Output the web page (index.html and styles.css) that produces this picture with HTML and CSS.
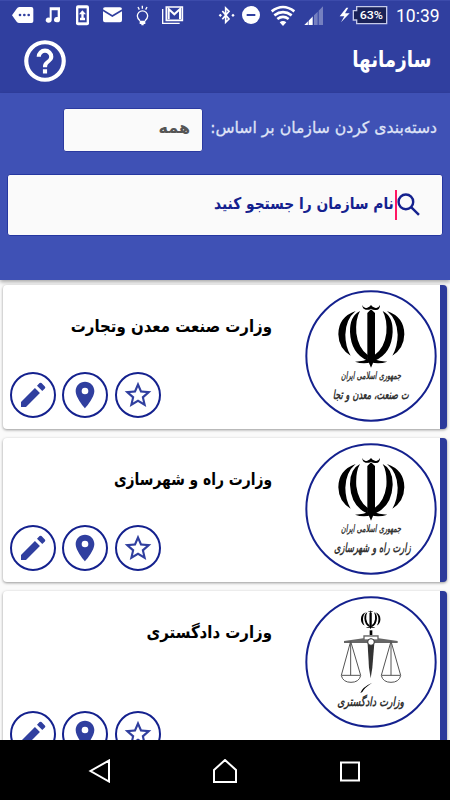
FILE: index.html
```html
<!DOCTYPE html>
<html lang="fa">
<head>
<meta charset="utf-8">
<meta name="viewport" content="width=device-width">
<title>سازمانها</title>
<link rel="stylesheet" href="styles.css">
</head>
<body>
<svg class="defs" aria-hidden="true">
  <defs>
    <symbol id="pencil" viewBox="0 0 24 24"><path d="M3 17.25V21h3.75L17.2 10.55l-3.75-3.75zM20.9 7.04a1 1 0 0 0 0-1.41l-2.54-2.54a1 1 0 0 0-1.41 0l-1.95 1.950 3.950 3.950z"/></symbol>
    <symbol id="pin" viewBox="0 0 24 24"><path d="M12 2C8.130 2 5 5.130 5 9c0 5.250 7 13 7 13s7-7.750 7-13c0-3.870-3.130-7-7-7zm0 9.500a2.500 2.500 0 1 1 0-5 2.500 2.500 0 0 1 0 5z"/></symbol>
    <symbol id="star" viewBox="0 0 24 24"><path d="M22 9.240l-7.190-.620L12 2 9.190 8.630 2 9.240l5.460 4.730L5.820 21 12 17.270 18.180 21l-1.630-7.030zM12 15.400l-3.760 2.270 1-4.280-3.320-2.880 4.380-.380L12 6.100l1.710 4.040 4.380.380-3.320 2.880 1 4.280z"/></symbol>
    <symbol id="emblem" viewBox="140 70 206 196">
      <path d="M216 76Q220 88 231 84Q239 81 242 76Q246 83 254 84Q264 87 269 76Q269 91 257 91Q248 92 242 87Q235 92 226 90Q216 88 216 76Z"/>
      <path d="M231 100L242 89 254 100V237L248 250 242 264 236 250 231 238Z"/>
      <path d="M209 94Q178 109 179 157Q182 222 232 243L233 227Q204 207 198 161Q195 118 209 94Z"/>
      <path d="M277 94Q308 109 307 157Q304 222 253 243L252 227Q282 207 288 161Q291 118 277 94Z"/>
      <path d="M196 94Q144 112 144 164Q145 207 181 228Q165 200 165 165Q166 119 196 94Z"/>
      <path d="M290 94Q342 112 342 164Q341 207 306 228Q322 200 322 165Q321 119 290 94Z"/>
      <path d="M194 246Q222 246 236 236H249Q264 246 291 246Q266 255 242 248Q218 255 194 246Z"/>
    </symbol>
  </defs>
</svg>
<div class="screen">
  <div class="status">
    <svg class="status-icons" viewBox="0 0 675 90">
      <g fill="#fff">
        <path d="M36 46L50 26Q53 21 58 21H94Q100 21 100 27V64Q100 69 94 69H58Q53 69 50 65Z"/>
        <path d="M149 22H180V59A9 8 0 1 1 173 51V31H155V60A9 8 0 1 1 149 53Z"/>
        <rect x="228" y="16" width="39" height="60" rx="6"/>
        <path d="M309 28Q309 22 315 22H360Q366 22 366 28L337 45Z"/>
        <path d="M309 34L337 51 366 34V61Q366 67 360 67H315Q309 67 309 61Z"/>
        <path d="M419 62H436V72H431V76H424V72H419Z"/>
      </g>
      <g fill="#303f9f"><circle cx="60" cy="45" r="4"/><circle cx="73" cy="45" r="4"/><circle cx="86" cy="45" r="4"/><path d="M235 25H260V67H235Z"/></g>
      <path d="M247 31L258 43H251V53H255V61H240V53H244V43H237Z" fill="#fff"/>
      <g fill="none" stroke="#fff" stroke-width="4">
        <path d="M420 62Q412 55 412 48A15 15 0 0 1 443 48Q443 55 435 62M427 17V26M414 21L418 29M441 21L437 29"/>
        <path d="M488 27V70H539"/>
        <path d="M499 21H547V61H499Z" stroke-width="5"/>
        <path d="M506 58V27L523 43 540 27V58" stroke-width="6"/>
      </g>
    </svg>
    <svg class="status-icons" viewBox="0 0 675 90">
      <path d="M-8 33L12 57 2 67V24L12 34-8 58" fill="none" stroke="#fff" stroke-width="5"/>
      <path d="M-14 41l5 5-5 5-5-5zM24 41l5 5-5 5-5-5z" fill="#fff"/>
      <circle cx="78" cy="45" r="27" fill="#fff"/><path d="M65 42H91V48H65Z" fill="#303f9f"/>
      <g fill="none" stroke="#fff" stroke-width="8"><path d="M140 34Q174 8 208 34M148 46Q174 27 200 46M157 57Q174 44 191 57"/></g>
      <path d="M164 67Q174 59 184 67L174 78Z" fill="#fff"/>
      <path d="M238 75L264 49V75Z" fill="#fff"/>
      <path d="M267 46L278 35V75H267ZM281 32L294 19V75H281Z" fill="#7580c0"/>
      <path d="M250 60V76M264 47V76" stroke="#303f9f" stroke-width="2"/>
      <path d="M364 23L344 49H358L348 67 374 40H360L370 23Z" fill="#fff"/>
      <path d="M395 20H485V71H395V60H385V32H395Z" fill="#1a2258" stroke="#c5cae9" stroke-width="4"/>
      <text class="battery" x="404" y="58" textLength="70" lengthAdjust="spacingAndGlyphs">63%</text>
      <text class="clock" x="513" y="66" textLength="131" lengthAdjust="spacingAndGlyphs">10:39</text>
    </svg>
  </div>
  <header class="header">
    <svg class="help" viewBox="0 0 24 24"><path d="M11 18h2v-2h-2zm1-16a10 10 0 1 0 0 20 10 10 0 0 0 0-20zm0 18a8 8 0 1 1 0-16 8 8 0 0 1 0 16zm0-14a4 4 0 0 0-4 4h2a2 2 0 1 1 4 0c0 2-3 1.750-3 5h2c0-2.250 3-2.500 3-5a4 4 0 0 0-4-4z"/></svg>
    <h1 class="title" dir="rtl">سازمانها</h1>
  </header>
  <section class="filter">
    <div class="filter-row" dir="rtl">
      <span class="label">دسته‌بندی کردن سازمان بر اساس:</span>
      <div class="select">همه</div>
    </div>
    <div class="search" dir="rtl">
      <svg class="search-icon" viewBox="0 0 22 22"><circle cx="8.500" cy="8.500" r="7" /><path d="M13.500 13.500L21 21"/></svg>
      <span class="caret"></span>
      <span class="query">نام سازمان را جستجو کنید</span>
    </div>
  </section>
  <main class="list">
    <article class="card">
      <div class="actions"><span class="action"><svg><use href="#pencil"/></svg></span><span class="action"><svg><use href="#pin"/></svg></span><span class="action"><svg><use href="#star"/></svg></span></div>
      <h2 class="name" dir="rtl">وزارت صنعت معدن وتجارت</h2>
      <svg class="logo" viewBox="44 31 396 396">
        <circle class="ring" cx="242" cy="229" r="194"/>
        <use href="#emblem" x="140" y="70" width="206" height="196"/>
        <text class="script" x="242" y="298" textLength="180" lengthAdjust="spacingAndGlyphs">جمهوری اسلامی ایران</text>
        <text class="script large" x="241" y="359" textLength="228" lengthAdjust="spacingAndGlyphs">ت صنعت، معدن و تجا</text>
      </svg>
    </article>
    <article class="card">
      <div class="actions"><span class="action"><svg><use href="#pencil"/></svg></span><span class="action"><svg><use href="#pin"/></svg></span><span class="action"><svg><use href="#star"/></svg></span></div>
      <h2 class="name narrow" dir="rtl">وزارت راه و شهرسازی</h2>
      <svg class="logo" viewBox="44 31 396 396">
        <circle class="ring" cx="242" cy="229" r="194"/>
        <use href="#emblem" x="140" y="70" width="206" height="196"/>
        <text class="script" x="242" y="298" textLength="180" lengthAdjust="spacingAndGlyphs">جمهوری اسلامی ایران</text>
        <text class="script large" x="246" y="359" textLength="230" lengthAdjust="spacingAndGlyphs">زارت راه و شهرسازی</text>
      </svg>
    </article>
    <article class="card tall">
      <div class="actions"><span class="action"><svg><use href="#pencil"/></svg></span><span class="action"><svg><use href="#pin"/></svg></span><span class="action"><svg><use href="#star"/></svg></span></div>
      <h2 class="name" dir="rtl">وزارت دادگستری</h2>
      <svg class="logo" viewBox="44 33 396 396">
        <circle class="ring" cx="242" cy="231" r="194"/>
        <use href="#emblem" x="210" y="75" width="62" height="58"/>
        <path d="M231 162H253L246 248 241 280 236 248Z" fill="#333"/>
        <path d="M238 136H246V150H238Z"/>
        <path d="M161 168L219 160V151H265V160L322 168V174H161Z" fill="#666"/>
        <path d="M223 155H261V163H223Z" fill="#fff"/>
        <circle cx="242" cy="171" r="10" fill="#fff" stroke="#333" stroke-width="3"/>
        <g fill="none" stroke="#555" stroke-width="3">
          <path d="M181 169L153 271H211ZM181 172V271M302 169L273 271H331ZM302 172V271"/>
          <path d="M153 272Q158 292 182 292T211 272M273 272Q278 292 302 292T331 272"/>
        </g>
        <path d="M246 293Q216 306 210 324L216 321Q222 308 246 293Z"/>
        <text class="script large" x="241" y="362" textLength="200" lengthAdjust="spacingAndGlyphs">وزارت دادگستری</text>
      </svg>
    </article>
  </main>
  <nav class="nav">
    <svg viewBox="0 0 24 24"><path d="M21 1.500V22.500L2.500 12Z"/></svg>
    <svg viewBox="0 0 24 24"><path d="M1 11L12 1 23 11V23H1Z"/></svg>
    <svg viewBox="0 0 24 24"><path d="M3 3.500H21V21.500H3Z"/></svg>
  </nav>
</div>
</body>
</html>
```
FILE: styles.css
```css
* { box-sizing: border-box; }
body { margin: 0; font-family: "DejaVu Sans", sans-serif; }
.defs { display: none; }
.screen { width: 450px; height: 800px; display: flex; flex-direction: column; overflow: hidden; background: #fafafa; }
.status { flex: none; height: 30px; display: flex; background: #303f9f; border-top: 1px solid #3c4bab; }
.status-icons { width: 225px; height: 30px; margin-top: -1px; overflow: visible; }
.battery { font: 500 35px Roboto, sans-serif; fill: #fff; }
.clock { font: 400 55px Roboto, sans-serif; fill: #fff; }
.header { flex: none; height: 63px; padding: 0 19px 0 20px; display: flex; justify-content: space-between; background: #303f9f; }
.help { width: 50px; height: 50px; margin-top: 6px; fill: #fff; }
.title { margin: 14px 0 0; font-size: 22px; line-height: 32px; font-weight: 700; color: #fff; transform: scaleX(.83); transform-origin: right; }
.filter { flex: none; height: 187px; padding: 15px 7px 0; background: #3f51b5; box-shadow: 0 2px 4px #0005; }
.filter-row { display: flex; align-items: center; gap: 7px; padding-right: 6px; height: 43px; }
.label { flex: none; width: 227px; font-size: 16px; line-height: 24px; color: #dfe3f6; white-space: nowrap; -webkit-text-stroke: .3px #dfe3f6; transform: translateY(-2px) scaleX(.978); transform-origin: right; }
.select { width: 140px; height: 44px; padding: 7px 12px; border: 1px solid #2b3aa0; border-radius: 3px; background: #fafafa; color: #555; font-size: 16px; line-height: 24px; font-weight: 700; }
.search { height: 62px; margin-top: 23px; padding-right: 22px; display: flex; align-items: center; border: 1px solid #2537a0; border-radius: 3px; background: #fafafa; }
.search-icon { width: 23px; height: 23px; margin-top: -1px; fill: none; stroke: #14218e; stroke-width: 2.300; }
.caret { width: 2px; height: 30px; background: #ff1764; }
.query { margin-right: 1px; padding-bottom: 3px; font-size: 16px; font-weight: 700; line-height: 24px; color: #14218e; white-space: nowrap; transform: scaleX(.861); transform-origin: right; }
.list { flex: 1; min-height: 0; overflow: hidden; padding: 5px 3px 0; display: flex; flex-direction: column; gap: 9px; }
.card { flex: none; height: 144px; padding: 5px 3.500px 0 6.500px; display: flex; background: #fff; border-right: 7px solid #2c3a9b; border-radius: 4px; box-shadow: 0 1px 3px #0006; }
.card.tall { height: 177px; }
.actions { flex: none; display: flex; align-items: flex-end; gap: 6.500px; padding-bottom: 11px; }
.action { width: 46px; height: 46px; display: grid; place-items: center; border: 2px solid #14218e; border-radius: 50%; }
.action svg { width: 32px; height: 32px; fill: #303f9f; }
.name { flex: 1; width: 0; margin: 23px 33px 0 0; height: 26px; font-size: 17px; line-height: 26px; font-weight: 700; color: #000; white-space: nowrap; transform: scaleX(.88); transform-origin: right; }
.name.narrow { transform: scaleX(.815); }
.logo { flex: none; width: 132px; height: 132px; }
.ring { fill: #fff; stroke: #14218e; stroke-width: 6; }
.script { font: italic 700 31px "DejaVu Sans", sans-serif; text-anchor: middle; fill: #333; }
.script.large { font-size: 38px; }
.nav { flex: none; height: 60px; padding: 2px 88px 0; display: flex; justify-content: space-between; align-items: center; background: #000; }
.nav svg { width: 24px; height: 24px; fill: none; stroke: #fff; stroke-width: 2; }
```
